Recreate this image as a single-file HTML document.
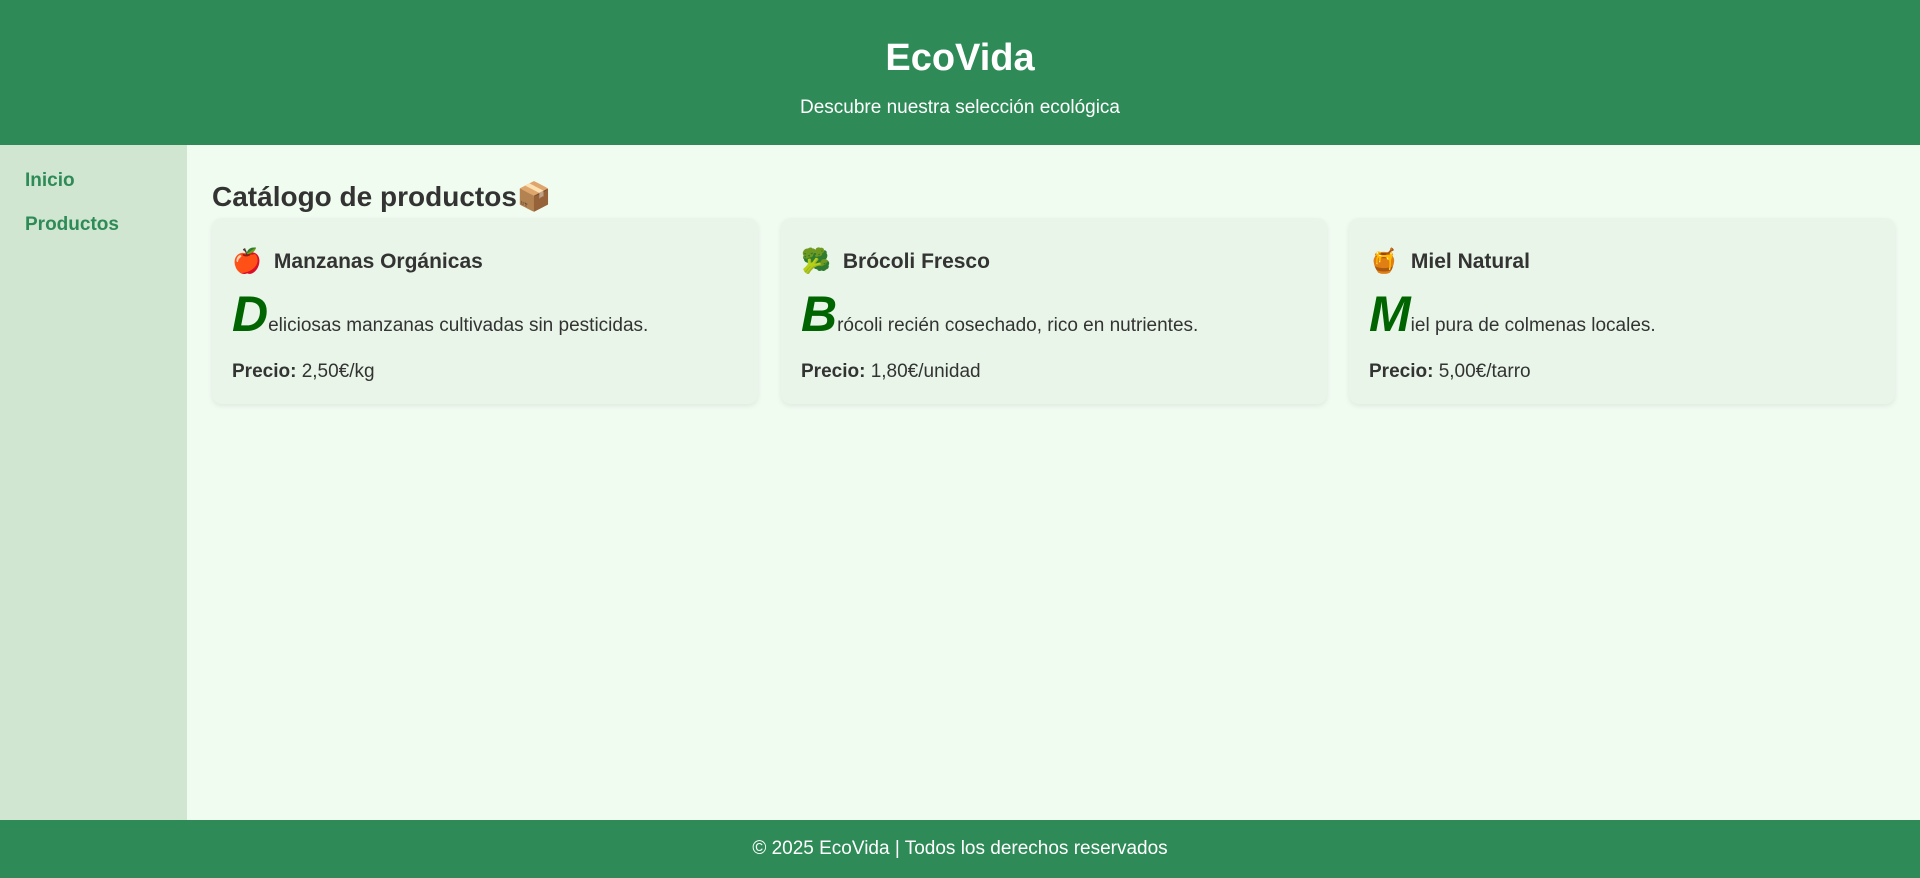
<!DOCTYPE html>
<html><head><meta charset="utf-8"><style>
*{box-sizing:border-box;margin:0;padding:0}
body{width:1920px;height:878px;font-family:"Liberation Sans",sans-serif;background:#f1fcf1;color:#333;position:relative;overflow:hidden}
header{height:145px;background:#2e8b57;color:#fff;text-align:center}
header h1{font-size:38px;padding-top:36px;line-height:44px}
header p{font-size:19px;margin-top:17px}
aside{position:absolute;left:0;top:145px;width:187px;height:675px;background:#d0e6d0}
aside a{position:absolute;left:25px;font-size:19px;font-weight:bold;color:#2e8b57;text-decoration:none}
main{position:absolute;left:212px;top:145px;right:25px}
main h2{position:absolute;top:36px;font-size:28px;line-height:32px}
.card{position:absolute;top:73px;width:546px;height:186px;background:#e8f5e8;border-radius:10px;box-shadow:0 2px 6px rgba(0,0,0,.08);padding:0 20px}
.t{position:absolute;left:20px;top:29px;font-size:21px;font-weight:bold;display:flex;align-items:center;gap:12px}
.t span{font-size:24px}
.d{position:absolute;left:20px;top:72px;font-size:19px;white-space:nowrap}
.d b{font-size:50px;font-style:italic;color:#006400;line-height:48px}
.p{position:absolute;left:20px;top:143px;font-size:19px}
footer{position:absolute;left:0;top:820px;width:1920px;height:58px;background:#2e8b57;color:#fff;text-align:center;font-size:19px;line-height:58px}
</style></head><body>
<header><h1>EcoVida</h1><p>Descubre nuestra selección ecológica</p></header>
<aside><a style="top:25px">Inicio</a><a style="top:69px">Productos</a></aside>
<main><h2>Catálogo de productos📦</h2>
<div class="card" style="left:0"><div class="t"><span>🍎</span> Manzanas Orgánicas</div><div class="d"><b>D</b>eliciosas manzanas cultivadas sin pesticidas.</div><div class="p"><strong>Precio:</strong> 2,50€/kg</div></div>
<div class="card" style="left:569px"><div class="t"><span>🥦</span> Brócoli Fresco</div><div class="d"><b>B</b>rócoli recién cosechado, rico en nutrientes.</div><div class="p"><strong>Precio:</strong> 1,80€/unidad</div></div>
<div class="card" style="left:1137px"><div class="t"><span>🍯</span> Miel Natural</div><div class="d"><b>M</b>iel pura de colmenas locales.</div><div class="p"><strong>Precio:</strong> 5,00€/tarro</div></div>
</main>
<footer>© 2025 EcoVida | Todos los derechos reservados</footer>
</body></html>
